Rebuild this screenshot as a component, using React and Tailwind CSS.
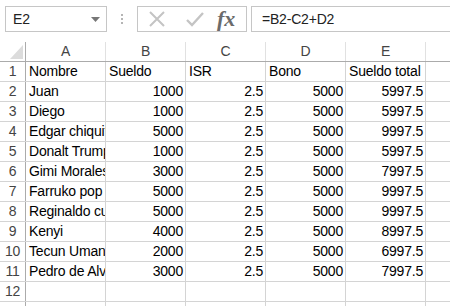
import React from "react";

const rows = [
  ["Nombre", "Sueldo", "ISR", "Bono", "Sueldo total"],
  ["Juan", "1000", "2.5", "5000", "5997.5"],
  ["Diego", "1000", "2.5", "5000", "5997.5"],
  ["Edgar chiquito", "5000", "2.5", "5000", "9997.5"],
  ["Donalt Trump", "1000", "2.5", "5000", "5997.5"],
  ["Gimi Morales", "3000", "2.5", "5000", "7997.5"],
  ["Farruko pop", "5000", "2.5", "5000", "9997.5"],
  ["Reginaldo cuevas", "5000", "2.5", "5000", "9997.5"],
  ["Kenyi", "4000", "2.5", "5000", "8997.5"],
  ["Tecun Uman", "2000", "2.5", "5000", "6997.5"],
  ["Pedro de Alvarado", "3000", "2.5", "5000", "7997.5"],
  ["", "", "", "", ""],
  ["", "", "", "", ""],
];

const cols = ["A", "B", "C", "D", "E", ""];

export default function App() {
  return (
    <div
      className="w-[450px] h-[306px] overflow-hidden bg-white text-black tracking-[-0.2px]"
      style={{ fontFamily: '"Liberation Sans", Arial, sans-serif' }}
    >
      {/* formula bar */}
      <div className="h-[42px] flex items-start pt-[6px] pl-[5px]">
        <div className="w-[102px] h-[26px] border border-[#c6c6c6] flex items-center justify-between pl-[7px] pr-[6px] text-[14px] text-[#222]">
          <span>E2</span>
          <svg width="9" height="5" viewBox="0 0 9 5">
            <path d="M0 0 L9 0 L4.5 5 Z" fill="#777" />
          </svg>
        </div>
        <div className="w-[30px] h-[26px] flex flex-col items-center justify-center gap-[2px]">
          <div className="w-[2px] h-[2px] bg-[#b5b5b5]" />
          <div className="w-[2px] h-[2px] bg-[#b5b5b5]" />
          <div className="w-[2px] h-[2px] bg-[#b5b5b5]" />
        </div>
        <div className="w-[110px] h-[26px] border border-[#c6c6c6] flex items-center">
          <svg width="26" height="20" viewBox="0 0 26 20" className="ml-[6px]">
            <path d="M6 3 L20 17 M20 3 L6 17" stroke="#c4c4c4" strokeWidth="2" />
          </svg>
          <svg width="26" height="20" viewBox="0 0 26 20" className="ml-[12px]">
            <path d="M5 11 L10 16 L21 4" stroke="#c4c4c4" strokeWidth="2.4" fill="none" />
          </svg>
          <span
            className="ml-[9px] text-[22px] italic font-bold text-[#6b6b6b] leading-none tracking-normal"
            style={{ fontFamily: '"Liberation Serif", "Times New Roman", serif' }}
          >
            fx
          </span>
        </div>
        <div className="ml-[4px] flex-1 h-[26px] border border-[#c6c6c6] border-r-0 flex items-center pl-[10px] text-[14px] text-[#222]">
          =B2-C2+D2
        </div>
      </div>

      {/* column headers */}
      <div className="flex h-[20px] border-b border-[#ababab]">
        <div className="w-[26px] shrink-0 border-r border-[#ababab] relative">
          <svg width="13" height="14" viewBox="0 0 13 14" className="absolute left-[10px] top-[3px]">
            <path d="M13 0 L13 14 L0 14 Z" fill="#dcdcdc" />
          </svg>
        </div>
        {cols.map((c, i) => (
          <div
            key={i}
            className="w-[80px] shrink-0 border-r border-[#e1e1e1] flex items-center justify-center text-[14px] text-[#444]"
          >
            {c}
          </div>
        ))}
      </div>

      {/* rows */}
      {rows.map((r, ri) => (
        <div key={ri} className="flex h-[20px] border-b border-[#d4d4d4]">
          <div className="w-[26px] shrink-0 border-r border-[#ababab] flex items-center justify-center text-[14px] text-[#444]">
            {ri + 1}
          </div>
          {r.map((v, ci) => (
            <div
              key={ci}
              className={
                "w-[80px] shrink-0 border-r border-[#d4d4d4] flex items-center overflow-hidden whitespace-nowrap text-[14px] " +
                (ri > 0 && ci > 0 ? "justify-end pr-[2px]" : "pl-[3px]")
              }
            >
              {v}
            </div>
          ))}
          <div className="w-[80px] shrink-0 border-r border-[#d4d4d4]" />
        </div>
      ))}
    </div>
  );
}
